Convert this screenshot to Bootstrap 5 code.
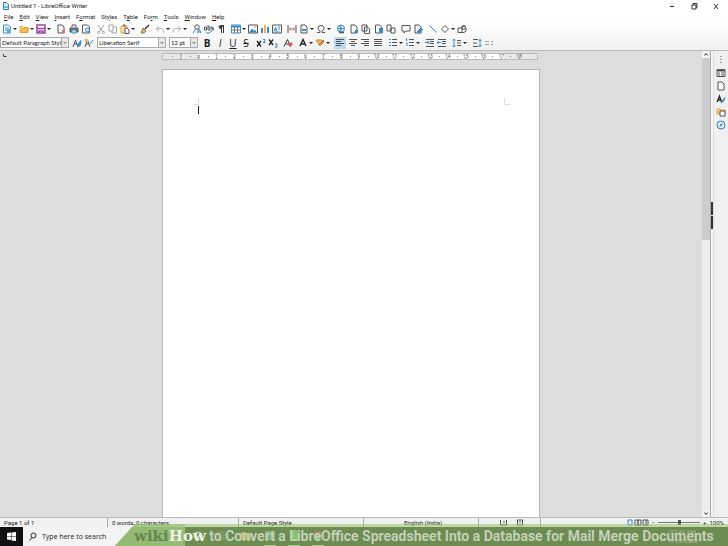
<!DOCTYPE html>
<html lang="en"><head><meta charset="utf-8"><title>Untitled 1 - LibreOffice Writer</title>
<meta name="viewport" content="width=device-width, initial-scale=1">
<link href="https://cdn.jsdelivr.net/npm/bootstrap@5.3.0/dist/css/bootstrap.min.css" rel="stylesheet">
<style>
body{font:6px/8px Roboto,"Noto Sans",sans-serif;color:#222;background:#ddd}
svg{display:block;fill:none;stroke:#555;stroke-width:1}
.chrome{background:linear-gradient(#fff 40%,#f1f1f1);border-bottom:1px solid #bcbcbc}
.titlebar{height:11px;padding:0 8px 0 3px;gap:2px}
.winbtns{gap:14px}
.plain{border:0;background:none;padding:0;color:inherit}
.menus{height:11px;padding:0 4px;gap:6px}
.menus a{color:#222;text-decoration:none}
.menus u{text-decoration-thickness:1px}
.bar{gap:3px;padding-left:1px}
.bar-std{height:13px}
.bar-fmt{height:15px;padding-left:0}
.near{gap:2px}
.tool{width:12px;height:12px;border:0;padding:0;background:none;display:flex;align-items:center;justify-content:center;flex:none}
.tool svg{width:10px;height:10px}
.tool.active{background:#b9dbf2}
.split::after{content:"";border:2px solid transparent;border-top-color:#222;border-bottom:0;margin-left:1px}
.split{width:17px}
.w-three{width:37px}.w-five{width:62px}.w-four{width:50px}.w-style{width:51px}
.combo{height:11px;border:1px solid #aaa;background:#fff;position:relative}
.combo select{appearance:none;border:0;padding:0 6px 0 1px;width:100%;height:9px;background:none;font:6px/9px Lato,sans-serif;color:#111;display:block}
.combo svg{position:absolute;right:0;top:0;width:7px;height:9px;background:#e6e6e6;border-left:1px solid #aaa;pointer-events:none}
.c-style{width:69px}.c-font{width:69px}.c-size{width:29px}
.glyph{font:bold 10px/12px "Open Sans",sans-serif;color:#222}
.ruler{width:376px;margin-left:162px;margin-top:2px;height:7px;border:1px solid #bbb;background:linear-gradient(90deg,#e8e8e8 35px,#fff 35px,#fff 341px,#e8e8e8 341px);padding:0 9px;font-size:5px;line-height:5px;color:#555}
.ruler span{flex:1 1 0;text-align:center;background:linear-gradient(#888,#888) 0 2px/1px 1px no-repeat,linear-gradient(#777,#777) 50% 100%/1px 1px no-repeat}
.sheet{width:378px;margin:9px 0 0 162px;border:1px solid #b5b5b5;border-bottom:0;background:#fff;padding:28px 28px 0 31px}
.scroll{width:8px;background:#ececec}
.scroll svg{width:8px;height:7px;background:#f4f4f4}
.thumb{background:#cdcdcd;flex:0 0 39%}
.split-pane{width:3px;background:#f6f6f6;border-left:1px solid #aaa}
.above-grip{flex:0 0 32.5%}
.grip{width:2px;height:13px;background:#333;margin-bottom:1px}
.side{width:15px;background:#f0f0f0;padding-top:2px;gap:1px;border-left:1px solid #ddd}
.side .tool:first-child{height:13px}
.status{height:10px;background:#f0f0f0;border-top:1px solid #bbb;line-height:9px}
.status>div{border-right:1px solid #aaa;padding-left:4px;flex:none}
.s1{width:108px}.s2{width:131px}.s3{width:125px}.s4{width:115px}.s5{width:62px}
.zoom-set{gap:3px;padding-right:4px}
.status input{width:42px;height:5px;appearance:none;background:linear-gradient(#777,#777) 0 2px/100% 1px no-repeat}
.status input::-webkit-slider-thumb{appearance:none;width:3px;height:5px;background:#555}
.task{height:19px;background:#f3f3f3;position:relative}
.start{width:23px;background:#111;border:0;padding:0}
.find{gap:5px;padding-left:6px}
.find input{border:0;background:none;padding:0;width:70px;font:7px/12px "Open Sans",sans-serif;color:#222}
.find input::placeholder{color:#222;opacity:1}
.caption-strip{position:absolute;left:115px;right:0;bottom:0;height:22px;background:linear-gradient(#8fba6880 3px,#6c8c52 3px);clip-path:polygon(20px 0,100% 0,100% 100%,0 100%)}
.caption-logo{width:70px;height:22px;background:linear-gradient(#8fba6880 3px,#94ba73 3px)}
.apps{gap:12px;padding:5px 0 0 7px}
.clock{padding:3px 30px 0 0;color:#aabd98;line-height:9px}
.caption-text{position:absolute;left:134px;right:0;bottom:1px;height:18px;white-space:nowrap;color:#c4cfba;font:bold 14px/18px Roboto,sans-serif}
.wiki,.how{font:bold 15px/18px "DejaVu Serif","Liberation Serif",serif;color:#668550}
.how{color:#eef3e9}
</style>
<script src="https://cdn.jsdelivr.net/npm/bootstrap@5.3.0/dist/js/bootstrap.bundle.min.js"></script>
</head>
<body class="vh-100 d-flex flex-column overflow-hidden">
<header class="chrome">
<div class="titlebar d-flex align-items-center">
<svg width="6" height="8" viewBox="0 0 6 8"><path d="M.5 .5h3l2 2v5h-5z" fill="#d8eef8" stroke="#2a86b5"/><path d="M1 5h4" stroke="#2a86b5"/></svg>
<span>Untitled 1 - LibreOffice Writer</span>
<div class="winbtns d-flex ms-auto">
<button class="plain" aria-label="Minimize"><svg width="8" height="8"><path d="M2 4.500h4" stroke="#333"/></svg></button>
<button class="plain" aria-label="Restore"><svg width="8" height="8"><path d="M2 3h4v4h-4zM3 3v-1.500h4v4h-1" stroke="#333"/></svg></button>
<button class="plain" aria-label="Close"><svg width="8" height="8"><path d="M2 2l4 5M6 2l-4 5" stroke="#333"/></svg></button>
</div></div>
<nav class="menus d-flex align-items-center"><a href="#"><u>F</u>ile</a><a href="#"><u>E</u>dit</a><a href="#"><u>V</u>iew</a><a href="#"><u>I</u>nsert</a><a href="#">F<u>o</u>rmat</a><a href="#">St<u>y</u>les</a><a href="#">T<u>a</u>ble</a><a href="#">Fo<u>r</u>m</a><a href="#"><u>T</u>ools</a><a href="#"><u>W</u>indow</a><a href="#"><u>H</u>elp</a></nav>
<div class="bar bar-std d-flex align-items-center">
<div class="d-flex">
<button class="tool split" aria-label="New"><svg viewBox="0 0 10 10"><path d="M1.500 1h5l2 2v6h-7z" fill="#fff" stroke="#348dcb"/><path d="M3 4h4M3 6h4" stroke="#348dcb"/><path d="M5 5h4v4h-4z" fill="#63aee0" stroke="none"/></svg></button>
<button class="tool split" aria-label="Open"><svg viewBox="0 0 10 10"><path d="M1 8.500v-6h3l1 1h4v5z" fill="#fbe2ae" stroke="#e6a33c"/><path d="M1 8.500l2-4h7l-2 4z" fill="#f5bd60" stroke="#e6a33c"/></svg></button>
<button class="tool split" aria-label="Save"><svg viewBox="0 0 10 10"><path d="M1 1h8v8h-8z" fill="#fff" stroke="#9b45a3" stroke-width="1.500"/><path d="M1 4.500h8M3 9v-2h4v2" stroke="#9b45a3" stroke-width="1.500"/></svg></button>
</div>
<div class="d-flex justify-content-between w-three">
<button class="tool" aria-label="Export as PDF"><svg viewBox="0 0 10 10"><path d="M2 1h4l2 2v6h-6z"/><path d="M6 6h3v3h-3z" fill="#e07562" stroke="none"/></svg></button>
<button class="tool" aria-label="Print"><svg viewBox="0 0 10 10"><path d="M3 3v-2h4v2"/><path d="M1 4h8v4h-8z" fill="#777"/><path d="M3 6h4v3h-4z" fill="#d5eaff" stroke="#348dcb"/></svg></button>
<button class="tool" aria-label="Print Preview"><svg viewBox="0 0 10 10"><path d="M1.500 1h5l2 2v6h-7z"/><circle cx="6.500" cy="6" r="2" stroke="#348dcb" fill="#d5eaff"/></svg></button>
</div>
<div class="d-flex">
<button class="tool" aria-label="Cut"><svg viewBox="0 0 10 10" opacity=".5"><path d="M2 1l5 7M8 1l-5 7"/><circle cx="2.500" cy="8.500" r="1"/><circle cx="7.500" cy="8.500" r="1"/></svg></button>
<button class="tool" aria-label="Copy"><svg viewBox="0 0 10 10" opacity=".5"><path d="M1 1h4v6h-4zM5 3h3.500v6h-4.500v-2"/></svg></button>
<button class="tool split" aria-label="Paste"><svg viewBox="0 0 10 10"><path d="M1 2h6v7h-6z" fill="#fbe2ae" stroke="#e6a33c"/><path d="M3 1h2v1h-2M5 4h2l2 2v3.500h-4z" fill="#fff"/></svg></button>
</div>
<button class="tool" aria-label="Clone Formatting"><svg viewBox="0 0 10 10"><path d="M9 1l-4 4" stroke="#333" stroke-width="1.500"/><path d="M3 4l3 3-2 2h-3z" fill="#efb252" stroke="#555" stroke-width=".7"/></svg></button>
<div class="d-flex">
<button class="tool split" aria-label="Undo"><svg viewBox="0 0 10 10" opacity=".4"><path d="M4 2l-3 3 3 2M1 4.500h5q3 0 3 4"/></svg></button>
<button class="tool split" aria-label="Redo"><svg viewBox="0 0 10 10" opacity=".4"><path d="M6 2l3 3-3 2M9 4.500h-5q-3 0-3 4"/></svg></button>
</div>
<div class="d-flex">
<button class="tool" aria-label="Find and Replace"><svg viewBox="0 0 10 10"><circle cx="5" cy="3" r="2.200"/><path d="M3.500 5l-2.500 4M5 9l2-4 2 4M6 8h3" stroke="#348dcb"/></svg></button>
<button class="tool" aria-label="Spelling"><svg viewBox="0 0 10 10"><path d="M.5 3h2v3h-2zM4 1v5h2v-3h-2M9.500 3h-2v1.500h2v1.500h-2"/><path d="M2 8l2 1.500 4-2.500" stroke="#348dcb"/></svg></button>
<button class="tool" aria-label="Formatting Marks"><svg viewBox="0 0 10 10"><path d="M7 1.500h-2.500a1.500 1.500 0 0 0 0 3h.5z" fill="#333"/><path d="M5.500 1v8M7.500 1v8" stroke="#333"/></svg></button>
</div>
<div class="d-flex">
<button class="tool split" aria-label="Insert Table"><svg viewBox="0 0 10 10"><path d="M.5 1h9v8h-9z" fill="#fff" stroke="#348dcb"/><path d="M.5 1.500h9v2h-9z" fill="#348dcb" stroke="none"/><path d="M.5 6h9M3.500 3v6M6.500 3v6" stroke="#777"/></svg></button>
<button class="tool" aria-label="Insert Image"><svg viewBox="0 0 10 10"><path d="M.5 1h9v8h-9z" fill="#fff"/><path d="M1 8.500l3-4 2 2 1-1 2 3z" fill="#348dcb" stroke="none"/><circle cx="7" cy="3" r="1" fill="#efb252" stroke="none"/></svg></button>
<button class="tool" aria-label="Insert Chart"><svg viewBox="0 0 10 10"><path d="M1 4h2v5h-2z" fill="#348dcb" stroke="none"/><path d="M4 1h2v8h-2z" fill="#efb252" stroke="none"/><path d="M7 3h2v6h-2z" fill="#348dcb" stroke="none"/></svg></button>
<button class="tool" aria-label="Insert Text Box"><svg viewBox="0 0 10 10"><path d="M.5 1h9v8h-9z" fill="#fff"/><path d="M2 7l1.500-4 1.500 4M2.500 6h2M6 3h2M6 5h2M2 8h6" stroke="#348dcb"/></svg></button>
</div>
<div class="d-flex">
<button class="tool" aria-label="Page Break"><svg viewBox="0 0 10 10"><path d="M1 1v8M9 1v8"/><path d="M3 5h4M3 3.500v3M7 3.500v3" stroke="#b66"/></svg></button>
<button class="tool split" aria-label="Insert Field"><svg viewBox="0 0 10 10"><path d="M2 1h4l2 2v6h-6z"/><path d="M3 6h4" stroke="#348dcb" stroke-width="2"/></svg></button>
<button class="tool split" aria-label="Special Character"><svg viewBox="0 0 10 10"><path d="M1 8.500h3v-1.500q-2-1-2-3 0-2.500 3-2.500t3 2.500q0 2-2 3v1.500h3"/></svg></button>
</div>
<div class="d-flex justify-content-between w-five">
<button class="tool" aria-label="Hyperlink"><svg viewBox="0 0 10 10"><circle cx="5" cy="4.500" r="3.500" stroke="#348dcb"/><path d="M1.500 4.500h7M5 1v7M3 2q4 2.500 0 5" stroke="#348dcb"/><path d="M3 8.500h5" stroke="#555" stroke-width="1.500"/></svg></button>
<button class="tool" aria-label="Footnote"><svg viewBox="0 0 10 10"><path d="M2 1h4l2 2v6h-6z"/><path d="M6 6h3v3h-3z" fill="#348dcb" stroke="none"/></svg></button>
<button class="tool" aria-label="Endnote"><svg viewBox="0 0 10 10"><path d="M1 1h5v6h-5zM3.500 3h3l2 2v4.500h-5z" fill="#fff"/></svg></button>
<button class="tool" aria-label="Bookmark"><svg viewBox="0 0 10 10"><path d="M1.500 1h4l2 2v6h-6z"/><path d="M5 4h4v5.500l-2-2-2 2z" fill="#348dcb" stroke="none"/></svg></button>
<button class="tool" aria-label="Cross-reference"><svg viewBox="0 0 10 10"><path d="M1 1h4v6h-4zM5 4h4v5h-4z" fill="#fff"/><path d="M3 5h3" stroke="#b66"/></svg></button>
</div>
<div class="d-flex">
<button class="tool" aria-label="Comment"><svg viewBox="0 0 10 10"><path d="M1 1.500h8v5.500h-4l-2 2v-2h-2z" fill="#fff"/></svg></button>
<button class="tool" aria-label="Track Changes"><svg viewBox="0 0 10 10"><path d="M2 1h4l2 2v6h-6z"/><path d="M4 8l4-4 1.500 1.500-3.500 3.500z" fill="#348dcb" stroke="#348dcb"/></svg></button>
</div>
<div class="d-flex">
<button class="tool" aria-label="Line"><svg viewBox="0 0 10 10"><path d="M1.500 1.500l7 7" stroke="#348dcb"/></svg></button>
<button class="tool split" aria-label="Shapes"><svg viewBox="0 0 10 10"><path d="M5 1.500l3.500 3.500-3.500 3.500-3.500-3.500z" fill="#fff"/></svg></button>
<button class="tool" aria-label="Draw Functions"><svg viewBox="0 0 10 10"><path d="M1 4h4v4.500h-4zM5 4l2-2 2 2v3l-2 1.500h-2"/><circle cx="6.500" cy="3.500" r="2"/></svg></button>
</div></div>
<div class="bar bar-fmt d-flex align-items-center">
<div class="near d-flex align-items-center">
<div class="combo c-style"><select aria-label="Paragraph style"><option>Default Paragraph Style</option></select><svg viewBox="0 0 7 9"><path d="M2 4l1.500 1.500 1.500-1.500" stroke="#444"/></svg></div>
<div class="d-flex"><button class="tool" aria-label="Update Style"><svg viewBox="0 0 10 10"><path d="M1 9l2.500-7 2.500 7M2 6h3"/><path d="M9 2l-3 4q-2 2 0 3 3-1 3-4z" fill="#348dcb" stroke="#348dcb" stroke-width=".5"/></svg></button>
<button class="tool" aria-label="New Style"><svg viewBox="0 0 10 10"><path d="M1 9l2.500-7 2.500 7M2 6h3"/><path d="M9 2l-3 4" stroke="#348dcb"/><path d="M1 1h3v3h-3z" fill="#efb252" stroke="none"/></svg></button></div>
<div class="combo c-font"><select aria-label="Font"><option>Liberation Serif</option></select><svg viewBox="0 0 7 9"><path d="M2 4l1.500 1.500 1.500-1.500" stroke="#444"/></svg></div>
</div>
<div class="combo c-size"><select aria-label="Size"><option>12 pt</option></select><svg viewBox="0 0 7 9"><path d="M2 4l1.500 1.500 1.500-1.500" stroke="#444"/></svg></div>
<div class="d-flex justify-content-between w-style"><button class="tool glyph">B</button><button class="tool glyph fw-normal fst-italic">I</button><button class="tool glyph fw-normal text-decoration-underline">U</button><button class="tool glyph fw-normal text-decoration-line-through">S</button></div>
<div class="d-flex"><button class="tool" aria-label="Superscript"><svg viewBox="0 0 10 10"><path d="M1 3l4 5.500M5 3l-4 5.500" stroke="#222" stroke-width="1.300"/><path d="M7 1.500h2v1.500l-2 1.500h2.500" stroke="#348dcb"/></svg></button>
<button class="tool" aria-label="Subscript"><svg viewBox="0 0 10 10"><path d="M1 1.500l4 5.500M5 1.500l-4 5.500" stroke="#222" stroke-width="1.300"/><path d="M7 6h2v1.500l-2 1.500h2.500" stroke="#348dcb"/></svg></button></div>
<button class="tool" aria-label="Clear Formatting"><svg viewBox="0 0 10 10"><path d="M1 8.500l3.500-7 3 7M3 6h4" stroke="#333"/><path d="M5 7l3-3 2 2-3 3z" fill="#dd5566" stroke="none"/></svg></button>
<div class="d-flex"><button class="tool split" aria-label="Font Color"><svg viewBox="0 0 10 10"><path d="M2 8l3-6.500 3 6.500M3 6h4" stroke="#222" stroke-width="1.400"/></svg></button>
<button class="tool split" aria-label="Highlighting"><svg viewBox="0 0 10 10"><path d="M1 2h6l2 2-4 4z" fill="#f0b35f" stroke="#dc8c37"/><path d="M9 2l-5 5" stroke="#666"/></svg></button></div>
<div class="d-flex justify-content-between w-four">
<button class="tool active" aria-label="Align Left"><svg viewBox="0 0 10 10"><path d="M1 1.500h8M1 3.500h5M1 5.500h8M1 7.500h5"/></svg></button>
<button class="tool" aria-label="Center"><svg viewBox="0 0 10 10"><path d="M1 1.500h8M3 3.500h4M1 5.500h8M3 7.500h4"/></svg></button>
<button class="tool" aria-label="Align Right"><svg viewBox="0 0 10 10"><path d="M1 1.500h8M4 3.500h5M1 5.500h8M4 7.500h5"/></svg></button>
<button class="tool" aria-label="Justify"><svg viewBox="0 0 10 10"><path d="M1 1.500h8M1 3.500h8M1 5.500h8M1 7.500h8"/></svg></button></div>
<div class="d-flex"><button class="tool split" aria-label="Bullets"><svg viewBox="0 0 10 10"><path d="M1 1.500h2M1 4.500h2M1 7.500h2" stroke="#348dcb"/><path d="M4 1.500h5M4 4.500h5M4 7.500h5"/></svg></button>
<button class="tool split" aria-label="Numbering"><svg viewBox="0 0 10 10"><path d="M1.500 0v3M1 5h1v3M4 7.500h1" stroke="#348dcb"/><path d="M4 1.500h5M4 4.500h5M4 7.500h5"/></svg></button></div>
<div class="d-flex"><button class="tool" aria-label="Increase Indent"><svg viewBox="0 0 10 10"><path d="M1 1.500h8M5 3.500h4M5 5.500h4M1 8.500h8"/><path d="M0 4.500h4M2.500 3l1.500 1.500-1.500 1.500" stroke="#348dcb"/></svg></button>
<button class="tool" aria-label="Decrease Indent"><svg viewBox="0 0 10 10"><path d="M1 1.500h8M5 3.500h4M5 5.500h4M1 8.500h8"/><path d="M0 4.500h4M1.500 3l-1.500 1.500 1.500 1.500" stroke="#348dcb"/></svg></button></div>
<button class="tool split" aria-label="Line Spacing"><svg viewBox="0 0 10 10"><path d="M2 1v8M.5 2.500l1.500-1.500 1.500 1.500M.5 7.500l1.500 1.500 1.500-1.500" stroke="#348dcb"/><path d="M5 2.500h4M5 5h4M5 7.500h4"/></svg></button>
<div class="d-flex"><button class="tool" aria-label="Increase Spacing"><svg viewBox="0 0 10 10"><path d="M1 1.500h5M1 8.500h5M1 5h4"/><path d="M8 1v8M6.500 3l1.500-1.500 1.500 1.500M6.500 7l1.500 1.500 1.500-1.500" stroke="#348dcb"/></svg></button>
<button class="tool" aria-label="Decrease Spacing"><svg viewBox="0 0 10 10" opacity=".5"><path d="M1 3.500h4M1 6.500h4M7 3.500h2M7 6.500h2"/></svg></button></div>
</div></header>
<main class="d-flex flex-fill overflow-hidden">
<div class="flex-fill d-flex flex-column">
<div class="d-flex position-relative"><svg class="position-absolute" width="10" height="8"><path d="M3.500 3v2.500h3" stroke="#444"/></svg><div class="ruler d-flex"><span>1</span><span>⧖</span><span>1</span><span>2</span><span>3</span><span>4</span><span>5</span><span>6</span><span>7</span><span>8</span><span>9</span><span>10</span><span>11</span><span>12</span><span>13</span><span>14</span><span>15</span><span>16</span><span>17</span><span>18</span></div></div>
<div class="sheet flex-fill d-flex justify-content-between"><svg width="7" height="16"><path d="M4.500 0v7M0 6.500h5" stroke="#ddd"/><path d="M4.500 8v8" stroke="#222"/></svg><svg width="7" height="16"><path d="M.5 0v6.500h6" stroke="#ddd"/></svg></div>
</div>
<div class="scroll d-flex flex-column"><svg viewBox="0 0 8 7"><path d="M2.500 4.500l1.500-2 1.500 2" stroke="#333"/></svg><div class="thumb"></div><svg class="mt-auto" viewBox="0 0 8 7"><path d="M2.500 2.500l1.500 2 1.500-2" stroke="#333"/></svg></div>
<div class="split-pane d-flex flex-column"><div class="above-grip"></div><div class="grip"></div><div class="grip"></div></div>
<aside class="side d-flex flex-column align-items-center">
<button class="tool" aria-label="Sidebar Settings"><svg viewBox="0 0 10 10"><path d="M5 1v1M5 4v1M5 7v1"/></svg></button>
<button class="tool" aria-label="Properties"><svg viewBox="0 0 10 10"><path d="M1 1.500h8v7h-8z" fill="#fff"/><path d="M1 2.500h8" stroke-width="2"/><path d="M2 5h2M5 5h3M2 7h2M5 7h3"/></svg></button>
<button class="tool" aria-label="Page"><svg viewBox="0 0 10 10"><path d="M2 1h4l2 2v6h-6z" fill="#fff"/></svg></button>
<button class="tool" aria-label="Styles"><svg viewBox="0 0 10 10"><path d="M1 8l2.500-6 2 6M2 6h3" stroke="#222" stroke-width="1.300"/><path d="M9 3l-3 4-1 2 3-2z" fill="#348dcb" stroke="#348dcb" stroke-width=".6"/></svg></button>
<button class="tool" aria-label="Gallery"><svg viewBox="0 0 10 10"><path d="M1 2h3l1 1h4v4h-8z" fill="#fbc878" stroke="#e6a33c"/><path d="M4 4h5v5h-5z" fill="#fff"/></svg></button>
<button class="tool" aria-label="Navigator"><svg viewBox="0 0 10 10"><circle cx="5" cy="5" r="4" stroke="#3b7cb0" fill="#e4f2fc"/><path d="M7 3l-1.500 3-2.500 1 1.500-3z" fill="#348dcb" stroke="none"/></svg></button>
</aside></main>
<footer>
<div class="status d-flex"><div class="s1">Page 1 of 1</div><div class="s2">0 words, 0 characters</div><div class="s3">Default Page Style</div><div class="s4 text-center">English (India)</div>
<div class="s5 d-flex align-items-center justify-content-center gap-2"><svg width="8" height="7"><path d="M.5 1v5h6v-5M3 3h2"/></svg><svg width="8" height="7"><path d="M1.500 1h5v5h-5zM3 3h2"/></svg></div>
<section class="zoom-set ms-auto d-flex align-items-center"><svg width="22" height="7"><path d="M1 1h4v5h-4z" stroke="#348dcb"/><path d="M8 1h3v5h-3zM11 1h3v5h-3zM16 1h3v5h-3zM19 1h2v5h-2"/></svg><span>−</span><input type="range" aria-label="Zoom" min="0" max="100" value="50"><span>+</span><span>100%</span></section></div>
<div class="task d-flex">
<button class="start" aria-label="Start"><svg class="mx-auto" width="9" height="9"><path d="M0 1l4-.5v3.500h-4zM4.500 .5l4.500-.5v4h-4.500zM0 4.500h4v3.500l-4-.5zM4.500 4.500h4.500v4.500l-4.500-.5z" fill="#fff" stroke="none"/></svg></button>
<label class="find d-flex align-items-center"><svg width="8" height="9"><circle cx="4.500" cy="3.500" r="2.500" stroke="#222"/><path d="M3 5.500l-2.500 3" stroke="#222"/></svg><input type="text" placeholder="Type here to search" aria-label="Search"></label>
<div class="caption-strip d-flex"><div class="caption-logo"></div>
<div class="apps d-flex">
<svg width="12" height="17"><circle cx="6" cy="7" r="4" stroke="#c6d3bb"/></svg>
<svg width="12" height="17"><path d="M2 3h5v8h-5zM9 3v8" stroke="#8ba575"/></svg>
<svg width="12" height="17"><path d="M1 3h4l1 1h5v7h-10z" fill="#b9b95e" stroke="none"/></svg>
<svg width="12" height="17"><path d="M1 2h10v9h-10z" fill="#82b184" stroke="none"/><path d="M0 16.500h12" stroke="#a5c98a"/></svg>
<svg width="12" height="17"><path d="M2 1h6l2 2v9h-8z" fill="#86c46e" stroke="none"/><path d="M0 16.500h12" stroke="#a5c98a"/></svg>
<svg width="12" height="17"><circle cx="6" cy="7" r="5" fill="#72ad5c" stroke="none"/><path d="M1.500 5a5 5 0 0 1 9 0h-5z" fill="#b88058" stroke="none"/><circle cx="6" cy="7" r="2" fill="#7ba7a8" stroke="#c6d3bb"/><path d="M0 16.500h12" stroke="#a5c98a"/></svg>
</div>
<div class="clock ms-auto text-center">07:41 AM<br>17-02-2020</div></div>
<div class="caption-text"><span class="wiki">wiki</span><span class="how">How</span> to Convert a LibreOffice Spreadsheet Into a Database for Mail Merge Documents</div>
</div></footer>
</body></html>
